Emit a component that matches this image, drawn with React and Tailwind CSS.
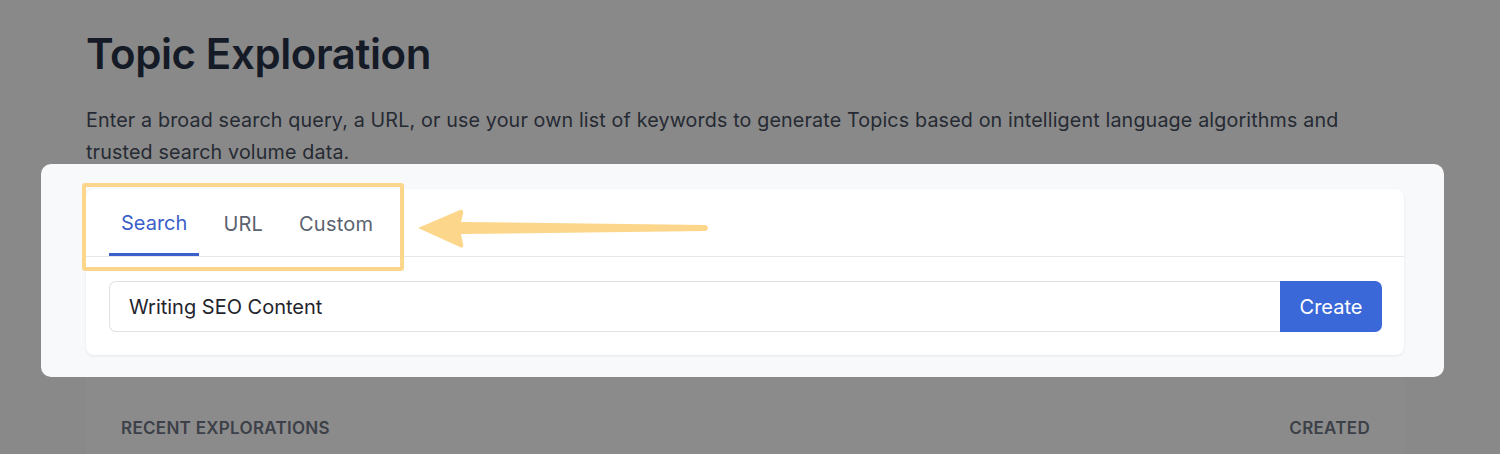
import React from "react";

const Arrow = () => (
    <svg width="300" height="46" viewBox="0 0 300 46" className="absolute left-[414px] top-[206px]">
        <path d="M4 22 L46 4 Q50 3 49 8 L47 16 L292 19 Q296 22 292 25 L47 28 L49 38 Q50 43 46 41 Z" fill="#fcd68a" />
    </svg>
);

const App = () => {
    const tabs = ["Search", "URL", "Custom"];
    return (
        <div className="relative w-[1500px] h-[454px] overflow-hidden bg-[#898989] font-['Inter',sans-serif]">
            <div className="pl-[86px] pt-[26px]">
                <h1 className="text-[42px] leading-[56px] font-semibold text-[#141a26] tracking-[-0.4px]">Topic Exploration</h1>
                <p className="mt-[22px] w-[1300px] text-[19.7px] leading-[32px] tracking-[0.15px] text-[#252a33]">
                    Enter a broad search query, a URL, or use your own list of keywords to generate Topics based on intelligent language algorithms and trusted search volume data.
                </p>
            </div>

            <div className="absolute left-[41px] top-[164px] w-[1403px] h-[213px] rounded-[10px] bg-[#f8f9fb] pt-[25px] pl-[45px]">
                <div className="w-[1318px] h-[166px] rounded-[8px] bg-white shadow-[0_1px_3px_rgba(0,0,0,0.08)]">
                    <div className="flex h-[68px] border-b border-[#e6e8ec] pl-[23px] gap-[12px]">
                        {tabs.map((t, i) => (
                            <div
                                key={t}
                                className={
                                    i === 0
                                        ? "flex items-center px-[12px] border-b-[3px] border-[#3c5fcb] text-[#3b5fc8] text-[20px] pt-[3px]"
                                        : "flex items-center px-[12px] text-[#5b6270] text-[20px] pt-[3px] tracking-[0.2px]"
                                }
                            >
                                {t}
                            </div>
                        ))}
                    </div>
                    <div className="flex pt-[24px] pl-[23px]">
                        <div className="w-[1171px] h-[51px] border border-[#dfe2e7] border-r-0 rounded-l-[7px] flex items-center pl-[19px] text-[20px] text-[#1f242c]">
                            Writing SEO Content
                        </div>
                        <button className="w-[102px] h-[51px] bg-[#3b68d8] rounded-r-[7px] text-white text-[20px]">Create</button>
                    </div>
                </div>
            </div>

            <div className="absolute left-[82px] top-[183px] w-[322px] h-[88px] border-[4px] border-[#fcd68a] rounded-[3px]" />
            <Arrow />

            <div className="absolute left-[86px] top-[378px] w-[1319px] h-[80px] bg-[#8b8b8b] flex justify-between px-[35px] pt-[38px]">
                <span className="text-[17px] font-semibold tracking-[0.3px] text-[#3c4048]">RECENT EXPLORATIONS</span>
                <span className="text-[17px] font-semibold tracking-[0.3px] text-[#3c4048]">CREATED</span>
            </div>
        </div>
    );
};

export default App;
